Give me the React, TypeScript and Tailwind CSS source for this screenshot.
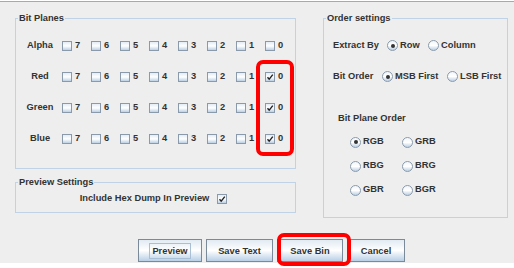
import React from 'react';

const font = { fontFamily: '"Liberation Sans", Arial, sans-serif' };

function CheckBox({ checked }: { checked?: boolean }) {
  return (
    <div className="relative w-[10px] h-[10px] border border-[#8a9aab] bg-linear-to-b from-[#e4ecf5] via-white to-[#bcd0e5] flex-shrink-0">
      {checked && (
        <svg width="8" height="8" viewBox="0 0 8 8" className="absolute left-0 top-0">
          <path d="M1.5 4.2 L3.2 6.2 L6.8 1.6" fill="none" stroke="#222" strokeWidth="1.4" />
        </svg>
      )}
    </div>
  );
}

function Radio({ selected, label, className = '' }: { selected?: boolean; label: string; className?: string }) {
  return (
    <div className={`flex items-center gap-[2px] ${className}`}>
      <div className="w-[11px] h-[11px] rounded-full border border-[#8a9aab] bg-linear-to-b from-[#f2f6fa] via-white to-[#bcd0e5] flex items-center justify-center flex-shrink-0">
        {selected && <div className="w-[4px] h-[4px] rounded-full bg-[#333]" />}
      </div>
      <span>{label}</span>
    </div>
  );
}

function Group({ title, className = '', children }: { title: string; className?: string; children?: React.ReactNode }) {
  return (
    <div className={`relative border border-[#c0d3e6] ${className}`}>
      <span className="absolute left-[2px] top-[-7px] px-[1px] bg-[#eeeeee] leading-[12px]">{title}</span>
      {children}
    </div>
  );
}

function Button({ label, focused, className = '' }: { label: string; focused?: boolean; className?: string }) {
  return (
    <div className={`h-[23px] border border-[#7a8a99] bg-linear-to-b from-[#e2eaf3] via-white to-[#b8cfe5] flex items-center justify-center ${className}`}>
      <span className={focused ? 'border border-[#a8bfd6] px-[2px] leading-[14px]' : 'leading-[14px]'}>{label}</span>
    </div>
  );
}

const planes = ['Alpha', 'Red', 'Green', 'Blue'];
const bits = [7, 6, 5, 4, 3, 2, 1, 0];

export default function App() {
  return (
    <div className="relative w-[514px] h-[268px] bg-white overflow-hidden pt-[1px] text-[9.3px] font-bold text-[#333333]" style={font}>
      <div className="h-[262px] bg-[#eeeeee] border-t border-[#a9a9a9] flex flex-col">
        <div className="flex mt-[16px] pl-[15px]">
          <div className="flex flex-col w-[281px]">
            <Group title="Bit Planes" className="h-[151px]">
              <div className="flex flex-col pt-[11px]">
                {planes.map(p => (
                  <div key={p} className="flex items-center h-[31px]">
                    <div className="w-[46px] text-center pl-[2px]">{p}</div>
                    {bits.map(b => (
                      <div key={b} className="flex items-center gap-[3px] w-[29px]">
                        <CheckBox checked={b === 0 && p !== 'Alpha'} />
                        <span>{b}</span>
                      </div>
                    ))}
                  </div>
                ))}
              </div>
            </Group>
            <Group title="Preview Settings" className="h-[31px] mt-[13px]">
              <div className="flex items-center justify-center gap-[8px] h-full pt-[3px] pr-[4px]">
                <span>Include Hex Dump In Preview</span>
                <CheckBox checked />
              </div>
            </Group>
          </div>
          <Group title="Order settings" className="ml-[27px] w-[185px] h-[200px]">
            <div className="flex flex-col pl-[9px] pt-[11px]">
              <div className="flex items-center h-[31px]">
                <span className="w-[54px]">Extract By</span>
                <Radio selected label="Row" className="w-[41px]" />
                <Radio label="Column" />
              </div>
              <div className="flex items-center h-[31px]">
                <span className="w-[49px]">Bit Order</span>
                <Radio selected label="MSB First" className="w-[65px]" />
                <Radio label="LSB First" />
              </div>
              <div className="mt-[20px] ml-[5px] leading-[12px]">Bit Plane Order</div>
              <div className="grid grid-cols-[52px_52px] ml-[17px] mt-[6px]">
                {[['RGB', true], ['GRB'], ['RBG'], ['BRG'], ['GBR'], ['BGR']].map(([l, s]) => (
                  <div key={l as string} className="h-[24px] flex items-center">
                    <Radio label={l as string} selected={!!s} />
                  </div>
                ))}
              </div>
            </div>
          </Group>
        </div>
        <div className="flex gap-[4px] pl-[138px] mt-[21px]">
          <Button label="Preview" focused className="w-[64px]" />
          <Button label="Save Text" className="w-[67px]" />
          <Button label="Save Bin" className="w-[66px]" />
          <Button label="Cancel" className="w-[58px]" />
        </div>
      </div>
      <div className="absolute left-[256px] top-[60px] w-[38px] h-[96px] border-[4px] border-[#ff0000] rounded-[7px]" />
      <div className="absolute left-[277px] top-[233px] w-[74px] h-[33px] border-[4px] border-[#ff0000] rounded-[7px]" />
    </div>
  );
}
